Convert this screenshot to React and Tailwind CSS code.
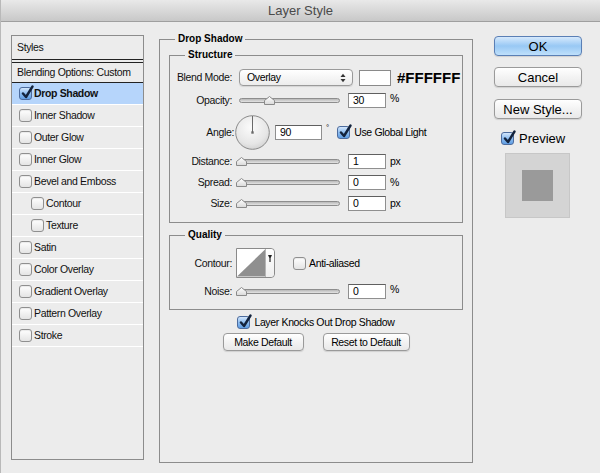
import React from "react";

const T = "text-[10.5px] tracking-[-0.35px] leading-none";

function Check({ checked = false }) {
  if (checked) {
    return (
      <span className="relative inline-block w-[13px] h-[13px] shrink-0 rounded-[3px] border border-[#4d6c9e] bg-linear-to-b from-[#d3e6fb] via-[#8dbdf0] to-[#5f9de3]">
        <svg className="absolute -top-[3px] left-[1px]" width="14" height="15" viewBox="0 0 14 15">
          <path d="M2 8.5 L5 12 L11.5 1.5" fill="none" stroke="#13233d" strokeWidth="2.4" strokeLinecap="round" strokeLinejoin="round" />
        </svg>
      </span>
    );
  }
  return (
    <span className="inline-block w-[13px] h-[13px] shrink-0 rounded-[3px] border border-[#8f8f8f] bg-linear-to-b from-[#ffffff] to-[#e4e4e4] shadow-[inset_0_1px_1px_rgba(0,0,0,0.08)]" />
  );
}

function Thumb() {
  return (
    <svg width="11" height="9" viewBox="0 0 11 9">
      <defs>
        <linearGradient id="tg" x1="0" y1="0" x2="0" y2="1">
          <stop offset="0" stopColor="#ffffff" />
          <stop offset="1" stopColor="#d9d9d9" />
        </linearGradient>
      </defs>
      <path d="M0.5 8.5 L0.5 4.5 L5.5 0.5 L10.5 4.5 L10.5 8.5 Z" fill="url(#tg)" stroke="#8a8a8a" strokeWidth="1" />
    </svg>
  );
}

function Slider({ atStart }) {
  return (
    <div className="relative w-[101px] h-[5px] rounded-full border border-[#8d8d8d] bg-linear-to-b from-[#b8b8b8] to-[#e4e4e4]">
      <span className={atStart ? "absolute -top-[3px] -left-[4px] flex" : "absolute -top-[3px] left-[24px] flex"}>
        <Thumb />
      </span>
    </div>
  );
}

function Field({ value, w = "w-[38px]" }) {
  return (
    <div className={`${w} h-[15px] bg-white border border-[#8f8f8f] border-t-[#5f5f5f] pl-[4px] flex items-center ${T} text-black`}>
      {value}
    </div>
  );
}

function Label({ children, w = "w-[62px]" }) {
  return <div className={`${w} text-right ${T} text-[#111]`}>{children}</div>;
}

function SliderRow({ label, value, unit, mt, atStart }) {
  return (
    <div className={`flex items-center h-[16px] ${mt}`}>
      <Label>{label}</Label>
      <div className="ml-[7px]">
        <Slider atStart={atStart} />
      </div>
      <div className="ml-[8px]">
        <Field value={value} />
      </div>
      <div className={`ml-[4px] ${T}`}>{unit}</div>
    </div>
  );
}

function ListRow({ label, checked, selected, sub, bold }) {
  return (
    <div
      className={`h-[22px] shrink-0 flex items-center border-b border-white ${sub ? "pl-[19px]" : "pl-[7px]"} ${
        selected ? "bg-[#b6d5fb]" : ""
      }`}
    >
      <Check checked={checked} />
      <span className={`ml-[2px] ${T} text-[#111] whitespace-nowrap ${bold ? "font-bold" : ""}`}>{label}</span>
    </div>
  );
}

function AquaButton({ children, primary, w, h, text }) {
  return (
    <div
      className={`${w} ${h} rounded-[4px] border flex items-center justify-center ${text} leading-none text-black whitespace-nowrap shadow-[0_1px_1px_rgba(0,0,0,0.12)] ${
        primary
          ? "border-[#5a7fb5] bg-linear-to-b from-[#d6e9fc] via-[#98c8f4] to-[#bfe0fb]"
          : "border-[#9a9a9a] bg-linear-to-b from-[#ffffff] via-[#f3f3f3] to-[#e9e9e9]"
      }`}
    >
      {children}
    </div>
  );
}

export default function App() {
  return (
    <div className="w-[600px] h-[473px] bg-[#ececec] flex flex-col overflow-hidden font-['Liberation_Sans',Arial,sans-serif] text-black border-l border-[#b9b9b9]">
      {/* Title bar */}
      <div className="h-[22px] shrink-0 bg-linear-to-b from-[#e9e9e9] to-[#c8c8c8] border-b border-[#9f9f9f] flex items-center justify-center text-[13px] text-[#4a4a4a]">
        Layer Style
      </div>

      <div className="flex items-start pl-[10px]">
        {/* Left styles list */}
        <div className="mt-[13px] w-[133px] h-[425px] border border-[#8c8c8c] flex flex-col">
          <div className={`h-[23px] shrink-0 flex items-center pl-[5px] ${T} text-[#111]`}>Styles</div>
          <div className="h-[4px] shrink-0 border-t border-b border-[#222]" />
          <div className={`h-[20px] shrink-0 flex items-center pl-[5px] ${T} whitespace-nowrap text-[#111] border-b border-[#222]`}>
            Blending Options: Custom
          </div>
          <ListRow label="Drop Shadow" checked selected bold />
          <ListRow label="Inner Shadow" />
          <ListRow label="Outer Glow" />
          <ListRow label="Inner Glow" />
          <ListRow label="Bevel and Emboss" />
          <ListRow label="Contour" sub />
          <ListRow label="Texture" sub />
          <ListRow label="Satin" />
          <ListRow label="Color Overlay" />
          <ListRow label="Gradient Overlay" />
          <ListRow label="Pattern Overlay" />
          <ListRow label="Stroke" />
        </div>

        {/* Center panel */}
        <div className="ml-[15px] mt-[17px] relative w-[314px] h-[424px] border border-[#8c8c8c] px-[9px] pt-[15px] flex flex-col">
          <span className="absolute -top-[7px] left-[15px] px-[3px] bg-[#ececec] text-[10px] font-bold leading-[12px]">Drop Shadow</span>

          {/* Structure */}
          <div className="relative h-[168px] border border-[#8c8c8c] flex flex-col">
            <span className="absolute -top-[7px] left-[15px] px-[3px] bg-[#ececec] text-[10px] font-bold leading-[12px]">Structure</span>

            <div className="flex items-center h-[17px] mt-[13px]">
              <Label>Blend Mode:</Label>
              <div className="ml-[7px] w-[114px] h-[17px] rounded-[4px] border border-[#9a9a9a] bg-linear-to-b from-[#ffffff] to-[#ececec] flex items-center pl-[7px] pr-[6px] justify-between shadow-[0_1px_1px_rgba(0,0,0,0.1)]">
                <span className={T}>Overlay</span>
                <svg width="6" height="10" viewBox="0 0 6 10">
                  <path d="M0.5 4 L3 0.8 L5.5 4 Z" fill="#333" />
                  <path d="M0.5 6 L3 9.2 L5.5 6 Z" fill="#333" />
                </svg>
              </div>
              <div className="ml-[6px] w-[32px] h-[16px] bg-white border border-[#8a8a8a]" />
              <div className="ml-[6px] text-[15px] font-bold leading-none">#FFFFFF</div>
            </div>

            <div className="flex items-center h-[16px] mt-[6px]">
              <Label>Opacity:</Label>
              <div className="ml-[7px]">
                <Slider />
              </div>
              <div className="ml-[8px]">
                <Field value="30" />
              </div>
              <div className={`ml-[4px] ${T} self-start mt-[1px]`}>%</div>
            </div>

            <div className="flex items-center h-[35px] mt-[7px]">
              <Label w="w-[64px]">Angle:</Label>
              <div className="ml-[1px] w-[35px] h-[35px] flex">
                <svg width="35" height="35" viewBox="0 0 35 35">
                  <defs>
                    <radialGradient id="ag" cx="0.45" cy="0.35" r="0.7">
                      <stop offset="0" stopColor="#fbfbfb" />
                      <stop offset="0.7" stopColor="#e6e6e6" />
                      <stop offset="1" stopColor="#cfcfcf" />
                    </radialGradient>
                  </defs>
                  <circle cx="17.5" cy="17.5" r="16.8" fill="url(#ag)" stroke="#8a8a8a" strokeWidth="1" />
                  <line x1="17.5" y1="17.5" x2="17.5" y2="1" stroke="#6a6a6a" strokeWidth="1" />
                  <rect x="16.3" y="16.3" width="2.4" height="2.4" fill="#6a6a6a" />
                </svg>
              </div>
              <div className="ml-[5px]">
                <Field value="90" w="w-[47px]" />
              </div>
              <div className="ml-[4px] self-start mt-[9px] text-[8px] leading-none">°</div>
              <div className="ml-[8px] flex items-center">
                <Check checked />
                <span className={`ml-[4px] ${T} whitespace-nowrap`}>Use Global Light</span>
              </div>
            </div>

            <SliderRow label="Distance:" value="1" unit="px" mt="mt-[3px]" atStart />
            <SliderRow label="Spread:" value="0" unit="%" mt="mt-[5px]" atStart />
            <SliderRow label="Size:" value="0" unit="px" mt="mt-[5px]" atStart />
          </div>

          {/* Quality */}
          <div className="relative mt-[12px] h-[75px] border border-[#8c8c8c] flex flex-col">
            <span className="absolute -top-[7px] left-[15px] px-[3px] bg-[#ececec] text-[10px] font-bold leading-[12px]">Quality</span>

            <div className="flex items-center h-[30px] mt-[12px]">
              <Label>Contour:</Label>
              <div className="ml-[4px] w-[39px] h-[30px] border border-[#8a8a8a] rounded-r-[4px] bg-white flex">
                <svg width="29" height="28" viewBox="0 0 29 28" className="border-r border-[#b5b5b5]">
                  <path d="M0 28 L29 0 L29 28 Z" fill="#8f8f8f" />
                </svg>
                <div className="flex-1 flex justify-center pt-[6px] bg-linear-to-b from-[#ffffff] to-[#eeeeee] rounded-r-[4px]">
                  <svg width="4" height="7" viewBox="0 0 4 7">
                    <path d="M0 0 L4 0 L2.6 3 L2.6 7 L1.4 7 L1.4 3 Z" fill="#222" />
                  </svg>
                </div>
              </div>
              <div className="ml-[18px] flex items-center">
                <Check />
                <span className={`ml-[3px] ${T} whitespace-nowrap`}>Anti-aliased</span>
              </div>
            </div>

            <div className="flex items-center h-[16px] mt-[5px]">
              <Label>Noise:</Label>
              <div className="ml-[7px]">
                <Slider atStart />
              </div>
              <div className="ml-[8px]">
                <Field value="0" />
              </div>
              <div className={`ml-[4px] ${T} self-start mt-[1px]`}>%</div>
            </div>
          </div>

          <div className="mt-[5px] h-[14px] flex items-center justify-center">
            <Check checked />
            <span className={`ml-[4px] ${T} whitespace-nowrap`}>Layer Knocks Out Drop Shadow</span>
          </div>

          <div className="mt-[4px] flex justify-center gap-[19px]">
            <AquaButton w="w-[81px]" h="h-[18px]" text="text-[10.5px] tracking-[-0.35px]">Make Default</AquaButton>
            <AquaButton w="w-[87px]" h="h-[18px]" text="text-[10.5px] tracking-[-0.35px]">Reset to Default</AquaButton>
          </div>
        </div>

        {/* Right column */}
        <div className="ml-[21px] mt-[14px] flex flex-col">
          <AquaButton primary w="w-[88px]" h="h-[20px]" text="text-[13px]">OK</AquaButton>
          <div className="mt-[11px]">
            <AquaButton w="w-[88px]" h="h-[20px]" text="text-[13px]">Cancel</AquaButton>
          </div>
          <div className="mt-[12px]">
            <AquaButton w="w-[88px]" h="h-[20px]" text="text-[13px]">New Style...</AquaButton>
          </div>
          <div className="mt-[12px] h-[14px] pl-[7px] flex items-center">
            <Check checked />
            <span className="ml-[5px] text-[13px] leading-none">Preview</span>
          </div>
          <div className="mt-[8px] ml-[11px] w-[65px] h-[65px] bg-[#d4d4d4] border border-[#c7c7c7] flex items-center justify-center">
            <div className="w-[31px] h-[31px] bg-[#9a9a9a]" />
          </div>
        </div>
      </div>
    </div>
  );
}
